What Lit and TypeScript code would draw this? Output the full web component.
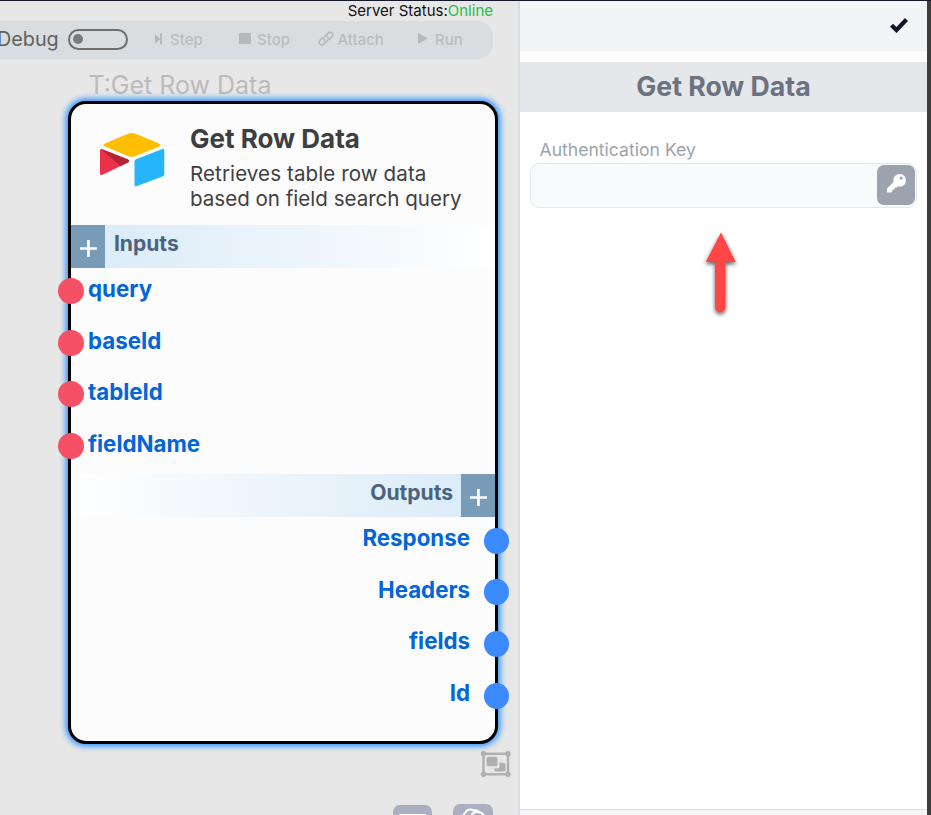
import { LitElement, html, css } from "lit";
import { customElement, property } from "lit/decorators.js";

@customElement("node-card")
class NodeCard extends LitElement {
  @property({ attribute: false }) inputs: string[] = [];
  @property({ attribute: false }) outputs: string[] = [];

  static styles = css`
    :host {
      display: flex;
      flex-direction: column;
      box-sizing: border-box;
      width: 430px;
      height: 643px;
      border: 3px solid #000;
      border-radius: 18px;
      background: #fcfcfc;
      box-shadow: 0 0 6px 1.5px #1c8cff;
    }
    .head {
      display: flex;
      flex: none;
      height: 121px;
      box-sizing: border-box;
      padding: 18px 0 0 28px;
    }
    .logo { width: 67px; height: 56px; margin-top: 10px; flex: none; }
    .words { margin-left: 24px; color: #404040; white-space: nowrap; }
    .title { font-size: 26px; font-weight: 700; line-height: 34px; color: #3c3e40; }
    .desc { font-size: 20.55px; line-height: 25px; margin-top: 5px; }
    .desc .first { letter-spacing: 0.1px; }
    .section {
      display: flex;
      flex: none;
      height: 43px;
      font-size: 21.1px;
      font-weight: 700;
      color: #4a637e;
      line-height: 37px;
      background: linear-gradient(to right, #d8eaf7, #fff);
    }
    .section.out { flex-direction: row-reverse; background: linear-gradient(to left, #d8eaf7, #fff); }
    .section span { margin: 0 7.5px 0 8.5px; }
    .plus { width: 34.4px; height: 43px; background: #789cb8; flex: none; }
    .port {
      position: relative;
      height: 51.6px;
      flex: none;
      font-size: 22.3px;
      font-weight: 700;
      line-height: 41.4px;
      color: #0265d8;
      padding-left: 17px;
    }
    .list { height: 206px; flex: none; }
    .port.out { text-align: right; padding: 0 25px 0 0; }
    .dot {
      position: absolute;
      left: -12.6px;
      top: 10.3px;
      width: 26px;
      height: 26px;
      border-radius: 50%;
      background: #f55064;
    }
    .out .dot { left: auto; right: -14px; top: 10.9px; width: 25.4px; background: #3b8aff; }
  `;

  plus() {
    return html`<svg class="plus" viewBox="0 0 34.5 43">
      <path d="M9 23.5h17M17.5 15v17" stroke="#fff" stroke-width="2.7" fill="none" />
    </svg>`;
  }

  render() {
    return html`
      <div class="head">
        <svg class="logo" viewBox="0 0 67 56">
          <path d="M29.5 1.6Q32.7.3 36 1.6L60 11.5Q63 13 60 14.4L36 24.2Q32.7 25.5 29.5 24.2L6 14.4Q3 13 6 11.5Z" fill="#ffbf00" />
          <path d="M35.5 29.5Q35.5 28 37 27.3L63.5 17.1Q65.3 16.6 65.3 18.5V42Q65.3 43.5 64 44.2L37.4 54.3Q35.5 54.7 35.5 53Z" fill="#26b5f8" />
          <path d="M1 18.5Q1 16.3 3.5 17.3L29 27.5Q31.4 29 29 30.5L3.5 42.8Q1 43.7 1 41.5Z" fill="#ed3049" />
          <path d="M2 17L29 27.5Q31.4 29 29 30.5L21.5 34Z" fill="#b22538" />
        </svg>
        <div class="words">
          <div class="title">Get Row Data</div>
          <div class="desc"><span class="first">Retrieves table row data</span><br />based on field search query</div>
        </div>
      </div>
      <div class="section">${this.plus()}<span>Inputs</span></div>
      <div class="list">
        ${this.inputs.map((n) => html`<div class="port"><i class="dot"></i>${n}</div>`)}
      </div>
      <div class="section out">${this.plus()}<span>Outputs</span></div>
      <div class="list">
        ${this.outputs.map((n) => html`<div class="port out"><i class="dot"></i>${n}</div>`)}
      </div>
    `;
  }
}

@customElement("app-root")
class AppRoot extends LitElement {
  static styles = css`
    :host {
      display: flex;
      box-sizing: border-box;
      width: 931px;
      height: 815px;
      overflow: hidden;
      border-top: 1px solid #15172b;
      font-family: Inter, sans-serif;
      background: #fff;
    }
    .canvas {
      position: relative;
      width: 518px;
      flex: none;
      background: #e7e7e7;
      border-right: 2px solid #d8dce2;
      overflow: hidden;
    }
    .status {
      height: 20px;
      padding-right: 25px;
      text-align: right;
      font-size: 15px;
      line-height: 20px;
      color: #111;
    }
    .status b { font-weight: 400; color: #1cc244; }
    .bar {
      display: flex;
      align-items: center;
      width: 493px;
      height: 38px;
      border-radius: 0 15px 15px 0;
      background: #d9dde0;
      color: #bcbcbc;
      font-size: 15px;
      font-weight: 500;
    }
    .debug { width: 71px; margin: -2px 0 0 -3px; color: #606060; font-size: 19.8px; font-weight: 400; }
    .toggle {
      box-sizing: border-box;
      width: 60px;
      height: 21px;
      margin-top: -2px;
      border: 2px solid #6e6e6e;
      border-radius: 11px;
      padding: 3.5px 3px;
    }
    .toggle i { display: block; width: 10px; height: 10px; border-radius: 50%; background: #7a7a7a; }
    .act { display: flex; align-items: center; white-space: nowrap; margin-top: -2px; }
    .act svg { display: block; flex: none; }
    .step { margin-left: 26px; width: 85px; }
    .stop { width: 79px; }
    .attach { width: 100px; }
    .step svg { margin-right: 7px; }
    .stop svg { margin-right: 6px; }
    .attach svg { margin-right: 3.5px; }
    .run svg { margin-right: 7px; }
    .label {
      margin: 9px 0 0 88.5px;
      font-size: 25px;
      font-weight: 400;
      line-height: 35px;
      color: #bbb;
      white-space: nowrap;
    }
    node-card { position: absolute; left: 68px; top: 100px; }
    .group { position: absolute; left: 480px; top: 749px; }
    .tools { position: absolute; left: 393px; top: 803px; display: flex; gap: 21px; align-items: flex-start; }
    .panel { display: flex; flex-direction: column; width: 407px; flex: none; }
    .top { display: flex; justify-content: flex-end; height: 50px; background: #f3f4f6; flex: none; }
    .top svg { margin: 15px 18.5px 0 0; }
    .name {
      height: 50px;
      margin-top: 11px;
      background: #e5e7eb;
      color: #6b7280;
      font-size: 26.7px;
      font-weight: 700;
      line-height: 48px;
      text-align: center;
      flex: none;
    }
    .field { margin: 27px 10px 0; }
    .field label { display: block; margin-left: 9.5px; font-size: 17.6px; line-height: 22px; color: #9ca3af; }
    .input {
      display: flex;
      justify-content: flex-end;
      box-sizing: border-box;
      width: 387px;
      height: 45px;
      margin-top: 2px;
      padding: 1px;
      border: 1px solid #e5e7eb;
      border-radius: 9px;
      background: #f9fafc;
    }
    .key { width: 38px; height: 40px; border-radius: 7px; background: #9ca3af; }
    .arrow { display: block; margin: 16px 0 0 175px; }
    .foot { margin-top: auto; height: 5px; border-top: 1px solid #dcdfe3; background: #f3f4f6; }
    .edge { flex: 1; background: #3d3d3d; }
  `;

  render() {
    return html`
      <div class="canvas">
        <div class="status">Server Status:<b>Online</b></div>
        <div class="bar">
          <div class="debug">Debug</div>
          <div class="toggle"><i></i></div>
          <div class="act step">
            <svg width="9" height="13" viewBox="0 0 9 13"><path d="M1 1L6.2 6L1 11ZM6 .5h2v11H6Z" fill="#b9b9b9" /></svg>Step
          </div>
          <div class="act stop">
            <svg width="12" height="14" viewBox="0 0 12 14"><path d="M0 1h12v11H0Z" fill="#b9b9b9" /></svg>Stop
          </div>
          <div class="act attach">
            <svg width="16" height="18" viewBox="0 0 16 18" fill="none" stroke="#b9b9b9" stroke-width="1.6" stroke-linecap="round">
              <path d="M6.5 10.8Q4.7 8.5 6.5 6.6L10 3.1Q12 1.5 14 3.2Q15.6 5 14 7L11.7 9.3" />
              <path d="M9.3 6.5Q11.1 8.8 9.3 10.7L6 14.1Q4 15.7 2 14Q.4 12.2 2 10.2L4 8.1" />
            </svg>Attach
          </div>
          <div class="act run">
            <svg width="10" height="14" viewBox="0 0 10 14"><path d="M0 1L10 6.5L0 12Z" fill="#b9b9b9" /></svg>Run
          </div>
        </div>
        <div class="label">T:Get Row Data</div>
        <node-card
          .inputs=${["query", "baseId", "tableId", "fieldName"]}
          .outputs=${["Response", "Headers", "fields", "Id"]}
        ></node-card>
        <svg class="group" width="31" height="28" viewBox="0 0 31 28">
          <rect x="3.5" y="3.8" width="24.5" height="20.5" fill="none" stroke="#b0b0b0" stroke-width="2.4" />
          <g fill="#b0b0b0">
            <circle cx="3.5" cy="3.8" r="2.7" /><circle cx="28" cy="3.8" r="2.7" />
            <circle cx="3.5" cy="24.3" r="2.7" /><circle cx="28" cy="24.3" r="2.7" />
            <rect x="6.5" y="6.8" width="11" height="9.5" rx="2" />
            <path d="M19.5 12.8H24Q25.500 12.800 25.500 14.300V20Q25.500 21.500 24 21.500H16Q14.300 21.500 14.300 19.500V18.300H17.500Q19.500 18.300 19.500 16.300Z" />
          </g>
        </svg>
        <div class="tools">
          <svg width="39" height="12" viewBox="0 0 39 12">
            <rect y="1" width="39" height="30" rx="7" fill="#abafc1" />
            <rect x="6" y="10" width="27" height="10" rx="1" fill="#fff" />
          </svg>
          <svg width="40" height="12" viewBox="0 0 40 12">
            <rect width="40" height="30" rx="7" fill="#abafc1" />
            <g fill="none" stroke="#fff" stroke-width="2">
              <path d="M11 13Q10 10 12.500 8.500Q14 5 18 5.500Q21 6 22 8" />
              <path d="M18 13Q19 8 24 8Q30 8 31.500 13" />
              <path d="M20 7Q24 5 27 8.500" />
            </g>
          </svg>
        </div>
      </div>
      <div class="panel">
        <div class="top">
          <svg width="20" height="18" viewBox="0 0 20 18"><path d="M2.500 9.200L7.500 14L17.500 3.500" fill="none" stroke="#101828" stroke-width="4.200" /></svg>
        </div>
        <div class="name">Get Row Data</div>
        <div class="field">
          <label>Authentication Key</label>
          <div class="input">
            <svg class="key" viewBox="0 0 38 40">
              <path fill="#fff" fill-rule="evenodd" d="M22.500 9A6.300 6.300 0 1 1 20.800 21.300L19.300 22.800H17.400V24.700H15.300V26.500L14.200 27.500H10.700Q10 27.500 10 26.800V23.500L16.500 17A6.300 6.300 0 0 1 22.500 9ZM24.200 11.500A1.600 1.600 0 1 0 24.200 14.700A1.600 1.600 0 1 0 24.200 11.500Z" />
            </svg>
          </div>
        </div>
        <svg class="arrow" width="52" height="100" viewBox="0 0 52 100">
          <defs><filter id="s" x="-40%" y="-20%" width="180%" height="150%"><feDropShadow dx="0" dy="2" stdDeviation="2" flood-color="#000" flood-opacity=".65" /></filter></defs>
          <path filter="url(#s)" d="M26 8.500L40.700 38H30.500V83A5 5 0 0 1 20 83V38H10.700Z" fill="#ff4444" />
        </svg>
        <div class="foot"></div>
      </div>
      <div class="edge"></div>
    `;
  }
}
